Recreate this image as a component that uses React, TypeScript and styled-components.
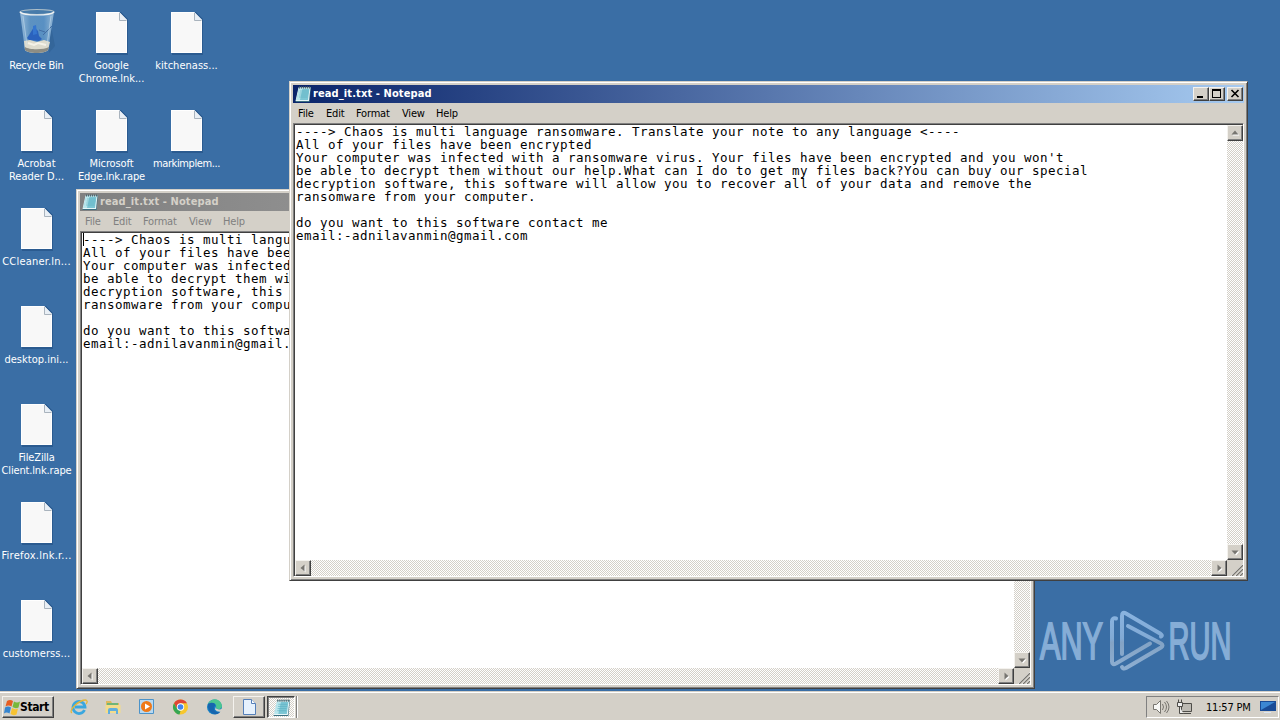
import React from "react";
import styled, { createGlobalStyle, css } from "styled-components";

const face = "#d4d0c8";
const ui = '"DejaVu Sans Condensed", "DejaVu Sans", "Liberation Sans", sans-serif';

const Global = createGlobalStyle`
  body { margin: 0; background: #3a6ea5; overflow: hidden; }
  * { box-sizing: border-box; }
`;

const raised = css`
  border: 1px solid;
  border-color: #f4f2ee #404040 #404040 #f4f2ee;
  box-shadow: inset -1px -1px 0 #808080;
`;

const checker = css`
  background: repeating-conic-gradient(#d4d0c8 0 25%, #fff 0 50%) 0 0 / 2px 2px;
`;

const Screen = styled.div`
  position: relative;
  width: 1280px;
  height: 720px;
  display: flex;
  flex-direction: column;
  background: #3a6ea5;
  font-family: ${ui};
  font-size: 11px;
  overflow: hidden;
`;

const Desktop = styled.main`
  flex: 1;
  min-height: 0;
`;

const IconGrid = styled.div`
  display: grid;
  grid-template-rows: repeat(7, 98px);
  grid-auto-columns: 75px;
  grid-auto-flow: column;
`;

const Shortcut = styled.div`
  display: flex;
  flex-direction: column;
  align-items: center;
  width: 73px;
  padding-top: 8px;
  svg { display: block; flex: none; }
`;

const Caption = styled.div<{ $track?: number }>`
  margin-top: 3px;
  color: #fff;
  font-size: 11px;
  line-height: 13px;
  text-align: center;
  white-space: pre;
  letter-spacing: ${(p) => p.$track ?? -0.25}px;
`;

const Frame = styled.section<{ $x: number; $y: number }>`
  position: absolute;
  left: ${(p) => p.$x}px;
  top: ${(p) => p.$y}px;
  width: 959px;
  height: 500px;
  display: flex;
  flex-direction: column;
  padding: 3px;
  background: ${face};
  border: 1px solid;
  border-color: ${face} #404040 #404040 ${face};
  box-shadow: inset 1px 1px 0 #fff, inset -1px -1px 0 #808080;
`;

const TitleBar = styled.header<{ $active: boolean }>`
  display: flex;
  align-items: center;
  height: 18px;
  flex: none;
  padding: 0 1px 0 2px;
  color: ${(p) => (p.$active ? "#fff" : "#d4d0c8")};
  background: ${(p) =>
    p.$active ? "linear-gradient(90deg, #0a246a, #a6caf0)" : "linear-gradient(90deg, #808080, #c0c0c0)"};
`;

const Title = styled.h1`
  flex: 1;
  margin: 0 0 0 2px;
  font: bold 11px/18px ${ui};
  letter-spacing: 0.11px;
  white-space: pre;
`;

const Buttons = styled.div`
  display: flex;
`;

const CaptionButton = styled.span<{ $gap?: boolean }>`
  ${raised}
  display: block;
  width: 16px;
  height: 14px;
  margin-left: ${(p) => (p.$gap ? 2 : 0)}px;
  background: ${face};
  svg { display: block; }
`;

const MenuBar = styled.nav<{ $active: boolean }>`
  display: flex;
  flex: none;
  height: 20px;
  padding: 1px 0 0 5px;
  line-height: 20px;
  color: ${(p) => (p.$active ? "#000" : "#808080")};
`;

const MenuItem = styled.span<{ $w: number }>`
  width: ${(p) => p.$w}px;
  letter-spacing: -0.2px;
  white-space: nowrap;
`;

const Editor = styled.div`
  flex: 1;
  display: grid;
  grid-template: 1fr 16px / 1fr 16px;
  border: 1px solid;
  border-color: #808080 #fff #fff #808080;
  box-shadow: inset 1px 1px 0 #404040;
  padding: 1px 0 0 1px;
`;

const Page = styled.pre`
  margin: 0;
  padding: 0 0 0 1px;
  background: #fff;
  color: #000;
  font: 12.5px/13px "DejaVu Sans Mono", monospace;
  letter-spacing: 0.475px;
  overflow: hidden;
`;

const Caret = styled.i`
  display: inline-block;
  width: 1px;
  height: 13px;
  margin-right: -1px;
  letter-spacing: 0;
  vertical-align: top;
  background: #000;
`;

const Scroll = styled.div<{ $vertical?: boolean }>`
  ${checker}
  display: flex;
  flex-direction: ${(p) => (p.$vertical ? "column" : "row")};
  justify-content: space-between;
`;

const ArrowButton = styled.span`
  ${raised}
  width: 16px;
  height: 16px;
  background: ${face};
  svg { display: block; }
`;

const TaskBar = styled.footer`
  position: relative;
  display: flex;
  align-items: center;
  height: 29px;
  padding: 3px 1px 0 2px;
  background: ${face};
  box-shadow: inset 0 1px 0 ${face}, inset 0 2px 0 #fff;
`;

const StartButton = styled.div`
  ${raised}
  display: flex;
  align-items: center;
  width: 52px;
  height: 22px;
  padding-left: 1px;
  font: bold 12px ${ui};
  letter-spacing: -0.4px;
  background: ${face};
  svg { margin-right: -1px; }
`;

const Quick = styled.div`
  display: flex;
  gap: 16px;
  margin-left: 16px;
`;

const TaskButton = styled.div<{ $down?: boolean }>`
  display: flex;
  align-items: center;
  justify-content: center;
  width: ${(p) => (p.$down ? 28 : 32)}px;
  height: 22px;
  margin-left: ${(p) => (p.$down ? 2 : 9)}px;
  ${(p) =>
    p.$down
      ? css`
          ${checker}
          border: 1px solid;
          border-color: #404040 #fff #fff #404040;
          box-shadow: inset 1px 1px 0 #808080;
        `
      : css`
          ${raised}
          background: ${face};
        `}
`;

const Divider = styled.div`
  width: 2px;
  height: 22px;
  margin-left: 1px;
  border-left: 1px solid #808080;
  border-right: 1px solid #fff;
`;

const Tray = styled.div`
  display: flex;
  align-items: center;
  width: 133px;
  height: 22px;
  margin-left: auto;
  padding-left: 5px;
  border: 1px solid;
  border-color: #808080 #fff #fff #808080;
`;

const Clock = styled.time`
  width: 54px;
  margin-left: 11px;
  letter-spacing: -0.2px;
  white-space: nowrap;
`;

const Watermark = styled.div`
  position: absolute;
  left: 1034px;
  top: 604px;
  svg { display: block; overflow: visible; }
`;

const DocIcon = () => (
  <svg width="36" height="48" viewBox="0 0 36 48">
    <path d="M3 4h24l7 7v36H3z" fill="#1f4c80" opacity=".55" />
    <path d="M2 4h23l8 8v33H2z" fill="#f8f8f8" />
    <path d="M2.500 4.500h22.500l7.500 8v32h-30z" fill="none" stroke="#fff" />
    <path d="M25 4v8h8z" fill="#e9eff5" />
    <path d="M25.500 5v7.500h7" fill="none" stroke="#a9b3bd" />
  </svg>
);

const BinIcon = () => (
  <svg width="40" height="48" viewBox="0 0 40 48">
    <defs>
      <linearGradient id="glass" x1="0" x2="1">
        <stop offset="0" stopColor="#a8c9e4" />
        <stop offset=".3" stopColor="#6398c6" />
        <stop offset=".7" stopColor="#5e96c8" />
        <stop offset="1" stopColor="#a4c4de" />
      </linearGradient>
    </defs>
    <path d="M34 18l4 20-6 7z" fill="#2e5d90" opacity=".5" />
    <path d="M3 4L8 42c2 4 20 4 23 0L37 4z" fill="url(#glass)" opacity=".85" />
    <path d="M12 27l5-8 4 4 1 5 3 3-3 2-10-1-2-2z" fill="#2a62bd" />
    <path d="M16 18l3-1 1 9-4 1z" fill="#3475cf" />
    <path d="M22 22l6 2M26 27l9-9" stroke="#416da4" fill="none" />
    <path d="M7 33l6-1 7 2 7-2 6 2-2 8c-3 4-20 4-23 0z" fill="#dddbcd" />
    <path d="M8 39c4 3 19 3 24 0l-1 3c-3 4-20 4-23 0z" fill="#8d8d84" />
    <path d="M11 35l6 2 4-2 8 2" stroke="#f4f2e8" strokeWidth="2" fill="none" />
    <path d="M6 8l4 29M34 8l-4 29" stroke="#d1e5f2" opacity=".5" />
    <ellipse cx="20" cy="4" rx="17" ry="2.500" fill="#477baa" stroke="#aebfc9" strokeWidth="1.200" />
    <path d="M3 4c4 4 30 4 34 0" fill="none" stroke="#eef2f4" strokeWidth="1.200" />
  </svg>
);

const NotepadIcon = ({ size = 16 }: { size?: number }) => (
  <svg width={size} height={size} viewBox="0 0 16 16">
    <path d="M4 1h12l-1.500 15H.5z" fill="#3c6f80" />
    <path d="M3.500 1.500H15.500L14 15H.5z" fill="#e7f7f9" />
    <path d="M4 2.500h10.500L13 14H1.500z" fill="#7cc6d4" />
    <path d="M4 2.500h3.500L5 14H1.500z" fill="#b8e6ec" />
    <path d="M5 5h8.500M4.700 7h8.500M4.300 9h8.500M4 11h8.500" stroke="#5aafc1" strokeWidth=".6" />
    <path d="M4.500 .5v2M6.500 .5v2M8.500 .5v2M10.500 .5v2M12.500 .5v2M14.500 .5v2" stroke="#53666b" />
  </svg>
);

const arrows = {
  up: "M4 9h7L7.500 5z",
  down: "M4 6h7l-3.500 4z",
  left: "M9 4v7L5 7.500z",
  right: "M6 4v7l4-3.500z",
};

const Arrow = ({ dir }: { dir: keyof typeof arrows }) => (
  <ArrowButton>
    <svg width="14" height="14" viewBox="0 0 14 14">
      <path d={arrows[dir]} fill="#fff" transform="translate(.5 .5)" />
      <path d={arrows[dir]} fill="#777570" transform="translate(-.5 -.5)" />
    </svg>
  </ArrowButton>
);

const note = `----> Chaos is multi language ransomware. Translate your note to any language <----
All of your files have been encrypted
Your computer was infected with a ransomware virus. Your files have been encrypted and you won't
be able to decrypt them without our help.What can I do to get my files back?You can buy our special
decryption software, this software will allow you to recover all of your data and remove the
ransomware from your computer.

do you want to this software contact me
email:-adnilavanmin@gmail.com`;

const menus: [string, number][] = [["File", 28], ["Edit", 30], ["Format", 46], ["View", 34], ["Help", 30]];

const Notepad = ({ x, y, active }: { x: number; y: number; active: boolean }) => (
  <Frame $x={x} $y={y}>
    <TitleBar $active={active}>
      <NotepadIcon />
      <Title>read_it.txt - Notepad</Title>
      <Buttons>
        <CaptionButton>
          <svg width="14" height="12"><path d="M3 8h6v2H3z" /></svg>
        </CaptionButton>
        <CaptionButton>
          <svg width="14" height="12"><path d="M2 1h9v9H2zM3 3v6h7V3z" fillRule="evenodd" /></svg>
        </CaptionButton>
        <CaptionButton $gap>
          <svg width="14" height="12"><path d="M3.500 2l7 7M10.500 2l-7 7" stroke="#000" strokeWidth="1.600" /></svg>
        </CaptionButton>
      </Buttons>
    </TitleBar>
    <MenuBar $active={active}>
      {menus.map(([m, w]) => <MenuItem key={m} $w={w}>{m}</MenuItem>)}
    </MenuBar>
    <Editor>
      <Page>{!active && <Caret />}{note}</Page>
      <Scroll $vertical><Arrow dir="up" /><Arrow dir="down" /></Scroll>
      <Scroll><Arrow dir="left" /><Arrow dir="right" /></Scroll>
      <svg width="16" height="16">
        <path d="M4 16L16 4M8 16l8-8M12 16l4-4" stroke="#fff" />
        <path d="M5 16L16 5M9 16l7-7M13 16l3-3" stroke="#77756f" strokeWidth="1.300" />
      </svg>
    </Editor>
  </Frame>
);

const shortcuts: [string, number?][] = [
  ["Recycle Bin"],
  ["Acrobat\nReader D...", 0],
  ["CCleaner.ln...", 0.2],
  ["desktop.ini...", 0.02],
  ["FileZilla\nClient.lnk.rape", -0.15],
  ["Firefox.lnk.r...", 0.25],
  ["customerss...", 0.1],
  ["Google\nChrome.lnk...", -0.05],
  ["Microsoft\nEdge.lnk.rape", -0.1],
];

export default function App() {
  return (
    <Screen>
      <Global />
      <Desktop>
        <IconGrid>
          {shortcuts.map(([name, t], i) => (
            <Shortcut key={name}>
              {i === 0 ? <BinIcon /> : <DocIcon />}
              <Caption $track={t}>{name}</Caption>
            </Shortcut>
          ))}
          {["kitchenass...", "markimplem..."].map((name, i) => (
            <Shortcut key={name} style={{ gridColumn: 3, gridRow: i + 1 }}>
              <DocIcon />
              <Caption $track={i ? -0.4 : 0.02}>{name}</Caption>
            </Shortcut>
          ))}
        </IconGrid>
        <Watermark>
          <svg width="220" height="76" viewBox="1034 604 220 76">
            <defs>
              <linearGradient id="mark" gradientUnits="userSpaceOnUse" x1="0" x2="0" y1="610" y2="671">
                <stop offset="0" stopColor="#8ab4e0" />
                <stop offset=".47" stopColor="#82aad5" />
                <stop offset=".53" stopColor="#83a3c5" />
                <stop offset="1" stopColor="#8eafd2" />
              </linearGradient>
            </defs>
            <g fill="#86add6" stroke="#86add6" strokeWidth="2" fontFamily="Liberation Sans" fontSize="51">
              <text transform="translate(1040 659) scale(.6 1)">ANY</text>
              <text transform="translate(1168.500 659) scale(.57 1)">RUN</text>
            </g>
            <g fill="none" stroke="url(#mark)" strokeWidth="4" strokeLinecap="round" strokeLinejoin="round">
              <path d="M1116 618.500q-4-1-4 3v40q0 4 4 2l34-20" />
              <path d="M1122 654v-38q0-5 4-2.500l34 20q3 2 1 3" />
              <path d="M1128 626l33 17.500q3 2 0 4l-35 20.500q-3 1.500-4-1" />
            </g>
          </svg>
        </Watermark>
        <Notepad x={76} y={189} active={false} />
        <Notepad x={289} y={81} active />
      </Desktop>
      <TaskBar>
        <StartButton>
          <svg width="17" height="17" viewBox="0 0 17 17">
            <path d="M3 2q3-2 6 0L7.500 7.500q-3-2-6 0z" fill="#e65d22" />
            <path d="M10 2.500q3 2 6 0L14.500 8.500q-3 1.500-6-.5z" fill="#78b83b" />
            <path d="M1 8.500q3-2 6 0l-1.500 6q-3-2-5.500 0z" fill="#3685cf" />
            <path d="M8 9q3 2 6 .5l-1.500 6q-3 1.500-6-.5z" fill="#f7c332" />
          </svg>
          Start
        </StartButton>
        <Quick>
          <svg width="18" height="18" viewBox="0 0 18 18">
            <path d="M14.500 12A6 6 0 1 1 15 9H5" fill="none" stroke="#3aa7df" strokeWidth="2.800" />
            <path d="M2 15c-4-2 6-13 14-13 2 1 1 3 0 4" fill="none" stroke="#e5b638" strokeWidth="1.300" />
          </svg>
          <svg width="18" height="18" viewBox="0 0 18 18">
            <path d="M2 3h5l1 2h7v9H2z" fill="#dfb95c" />
            <path d="M3 5h11v3H3z" fill="#70b577" />
            <path d="M1.500 7h15v8h-15z" fill="#f3dc8c" />
            <path d="M4 16v-4q0-2 2-2h6q2 0 2 2v4h-2v-3H6v3z" fill="#61aedd" />
          </svg>
          <svg width="18" height="18" viewBox="0 0 18 18">
            <path d="M1.500 1.500h14v14h-14z" fill="#b8d9f1" stroke="#4c93c9" />
            <circle cx="8.500" cy="8.500" r="5.500" fill="#ef7918" />
            <path d="M7 5.500v6l5-3z" fill="#fff" />
          </svg>
          <svg width="18" height="18" viewBox="0 0 18 18">
            <circle cx="8.500" cy="9" r="7.500" fill="#f7c72d" />
            <path d="M2 5.200A7.500 7.500 0 0 1 15 5.200H8.500L5.200 11z" fill="#df4535" />
            <path d="M2 5.200l3.200 5.700L8.500 13l-1 3.500A7.500 7.500 0 0 1 2 5.200z" fill="#35a653" />
            <circle cx="8.500" cy="9" r="3.700" fill="#fff" />
            <circle cx="8.500" cy="9" r="2.800" fill="#4285ed" />
          </svg>
          <svg width="18" height="18" viewBox="0 0 18 18">
            <circle cx="8.500" cy="9" r="7.500" fill="#147fc4" />
            <path d="M2 6C5-1 15 0 16 8c0 4-6 4-6 1 1-4-4-5-8-3z" fill="#4bc591" />
            <path d="M2 6c5-3 9 0 6 3-1 4 3 6 6 5-4 5-13 1-12-8z" fill="#1765ae" />
            <path d="M10 8q-1 3 3 3.500 2 0 3-1v3q-5 1-7-2z" fill="#d4d0c8" />
          </svg>
        </Quick>
        <TaskButton>
          <svg width="16" height="16" viewBox="0 0 16 16">
            <path d="M2.500 .5h8l4 4v11h-12z" fill="#e6f1fd" stroke="#547fb9" />
            <path d="M10.500 .5v4h4" fill="#fff" stroke="#547fb9" />
          </svg>
        </TaskButton>
        <TaskButton $down><NotepadIcon size={17} /></TaskButton>
        <Divider />
        <Tray>
          <svg width="19" height="18" viewBox="0 0 19 18" fill="none" stroke="#77756f">
            <path d="M1.500 6.500h3l4-4v13l-4-4h-3z" fill="#f7f7f5" />
            <path d="M10.500 6q2 3 0 6M12.500 4q4 5 0 10M14.500 3q5 6 0 12" />
          </svg>
          <svg width="19" height="18" viewBox="0 0 19 18" fill="#eee" stroke="#4e4d49" style={{ marginLeft: 5 }}>
            <path d="M5.500 5.500h10v8h-10z" fill="#bdbab3" />
            <path d="M7 15.500h8" />
            <path d="M1.500 4.500h5v4h-5zM2.500 1.500v3M5.500 1.500v3M3.500 8.500v7h4" />
          </svg>
          <Clock>11:57 PM</Clock>
          <svg width="16" height="14" viewBox="0 0 16 14">
            <path d="M0 1h16v10H0z" fill="#194b96" />
            <path d="M1 2h14L1 10z" fill="#3b87d3" />
            <path d="M4 12h7v1H4z" fill="#dce6f3" />
          </svg>
        </Tray>
      </TaskBar>
    </Screen>
  );
}
